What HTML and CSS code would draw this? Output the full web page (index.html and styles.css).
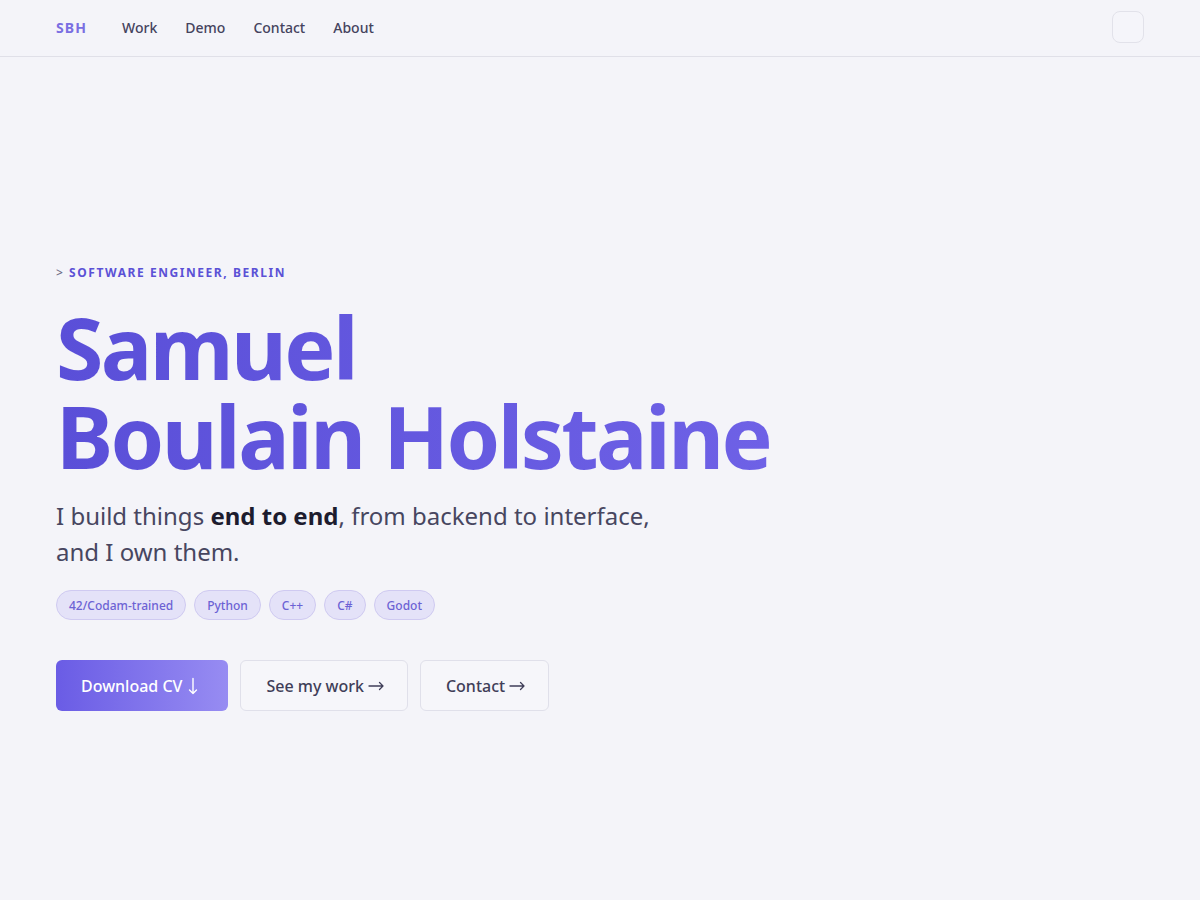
FILE: index.html
```html
<!DOCTYPE html>
<html lang="en">
<head>
<meta charset="utf-8">
<title>Samuel Boulain Holstaine</title>
<link rel="stylesheet" href="styles.css">
</head>
<body>
<header class="nav">
  <div class="nav-left">
    <a class="logo" href="#">SBH</a>
    <nav class="links">
      <a href="#">Work</a>
      <a href="#">Demo</a>
      <a href="#">Contact</a>
      <a href="#">About</a>
    </nav>
  </div>
  <button class="theme-btn" aria-label="Toggle theme"></button>
</header>
<main class="hero">
  <div class="hero-inner">
    <p class="eyebrow"><span class="caret">&gt;</span> SOFTWARE ENGINEER, BERLIN</p>
    <h1 class="title">Samuel<br>Boulain Holstaine</h1>
    <p class="lead">I build things <strong>end to end</strong>, from backend to interface,<br>and I own them.</p>
    <ul class="tags">
      <li>42/Codam-trained</li>
      <li>Python</li>
      <li>C++</li>
      <li>C#</li>
      <li>Godot</li>
    </ul>
    <div class="actions">
      <a class="btn btn-primary" href="#">Download CV<svg class="ico-down" width="10" height="18" viewBox="0 0 10 18" aria-hidden="true"><path d="M5 1.5V16.5M1.5 13L5 16.5L8.5 13" fill="none" stroke="currentColor" stroke-width="1.4" stroke-linecap="round" stroke-linejoin="round"/></svg></a>
      <a class="btn btn-ghost" href="#">See my work<svg class="ico-right" width="16" height="10" viewBox="0 0 16 10" aria-hidden="true"><path d="M1 5H15M11.5 1.5L15 5L11.5 8.5" fill="none" stroke="currentColor" stroke-width="1.3" stroke-linecap="round" stroke-linejoin="round"/></svg></a>
      <a class="btn btn-ghost" href="#">Contact<svg class="ico-right" width="16" height="10" viewBox="0 0 16 10" aria-hidden="true"><path d="M1 5H15M11.5 1.5L15 5L11.5 8.5" fill="none" stroke="currentColor" stroke-width="1.3" stroke-linecap="round" stroke-linejoin="round"/></svg></a>
    </div>
  </div>
</main>
</body>
</html>
```
FILE: styles.css
```css
* { box-sizing: border-box; }
html, body { margin: 0; padding: 0; }
body {
  background: #f4f4f9;
  font-family: "Noto Sans", "Open Sans", sans-serif;
  color: #3f3e58;
}
a { text-decoration: none; color: inherit; }

.nav {
  height: 57px;
  border-bottom: 1px solid #e0e0e8;
  display: flex;
  align-items: center;
  justify-content: space-between;
  padding: 0 56px 2px;
}
.nav-left { display: flex; align-items: center; }
.logo {
  font-size: 14px;
  font-weight: 700;
  letter-spacing: 0.08em;
  color: #7a6ee2;
  margin-right: 35px;
}
.links { display: flex; gap: 28px; }
.links a {
  font-size: 14px;
  font-weight: 500;
  color: #45435e;
}
.theme-btn {
  width: 32px;
  height: 32px;
  border: 1px solid #e2e2ea;
  border-radius: 8px;
  background: #f5f5fa;
  padding: 0;
}

.hero {
  padding: 187px 56px 0;
}
.hero-inner { padding-top: 20px; }
.eyebrow {
  margin: 0 0 21px;
  font-size: 12px;
  font-weight: 700;
  letter-spacing: 0.13em;
  color: #5b51d6;
}
.caret { color: #6f6d86; font-weight: 500; }
.title {
  margin: 0;
  font-size: 86px;
  line-height: 89px;
  font-weight: 700;
  letter-spacing: -0.03em;
  background: linear-gradient(90deg, #5a4fd8 0%, #6e61e6 100%);
  -webkit-background-clip: text;
  background-clip: text;
  color: transparent;
  display: inline-block;
  padding-bottom: 6px;
}
.lead {
  margin: 12px 0 0;
  font-size: 24px;
  line-height: 36px;
  color: #474660;
}
.lead strong { color: #1d1c2e; font-weight: 700; }
.tags {
  list-style: none;
  margin: 20px 0 0;
  padding: 0;
  display: flex;
  gap: 8px;
}
.tags li {
  height: 30px;
  display: flex;
  align-items: center;
  padding: 0 12px;
  border-radius: 15px;
  background: #e4e2f8;
  border: 1px solid #cfcaf1;
  color: #6c62d4;
  font-size: 12px;
  font-weight: 500;
}
.actions {
  margin-top: 40px;
  display: flex;
  gap: 12px;
}
.btn {
  height: 51px;
  display: flex;
  align-items: center;
  padding: 0 23px 0 25px;
  border-radius: 6px;
  font-size: 16px;
  font-weight: 500;
}
.btn-primary {
  background: linear-gradient(90deg, #6a5ce5 0%, #978cf2 100%);
  color: #ffffff;
  padding: 0 30px 0 25px;
}
.ico-down { margin-left: 6px; display: block; }
.btn-ghost {
  background: #f6f6fa;
  border: 1px solid #e0e0ea;
  color: #3f3e58;
}
.ico-right { margin-left: 4px; display: block; margin-top: 1px; }
```
